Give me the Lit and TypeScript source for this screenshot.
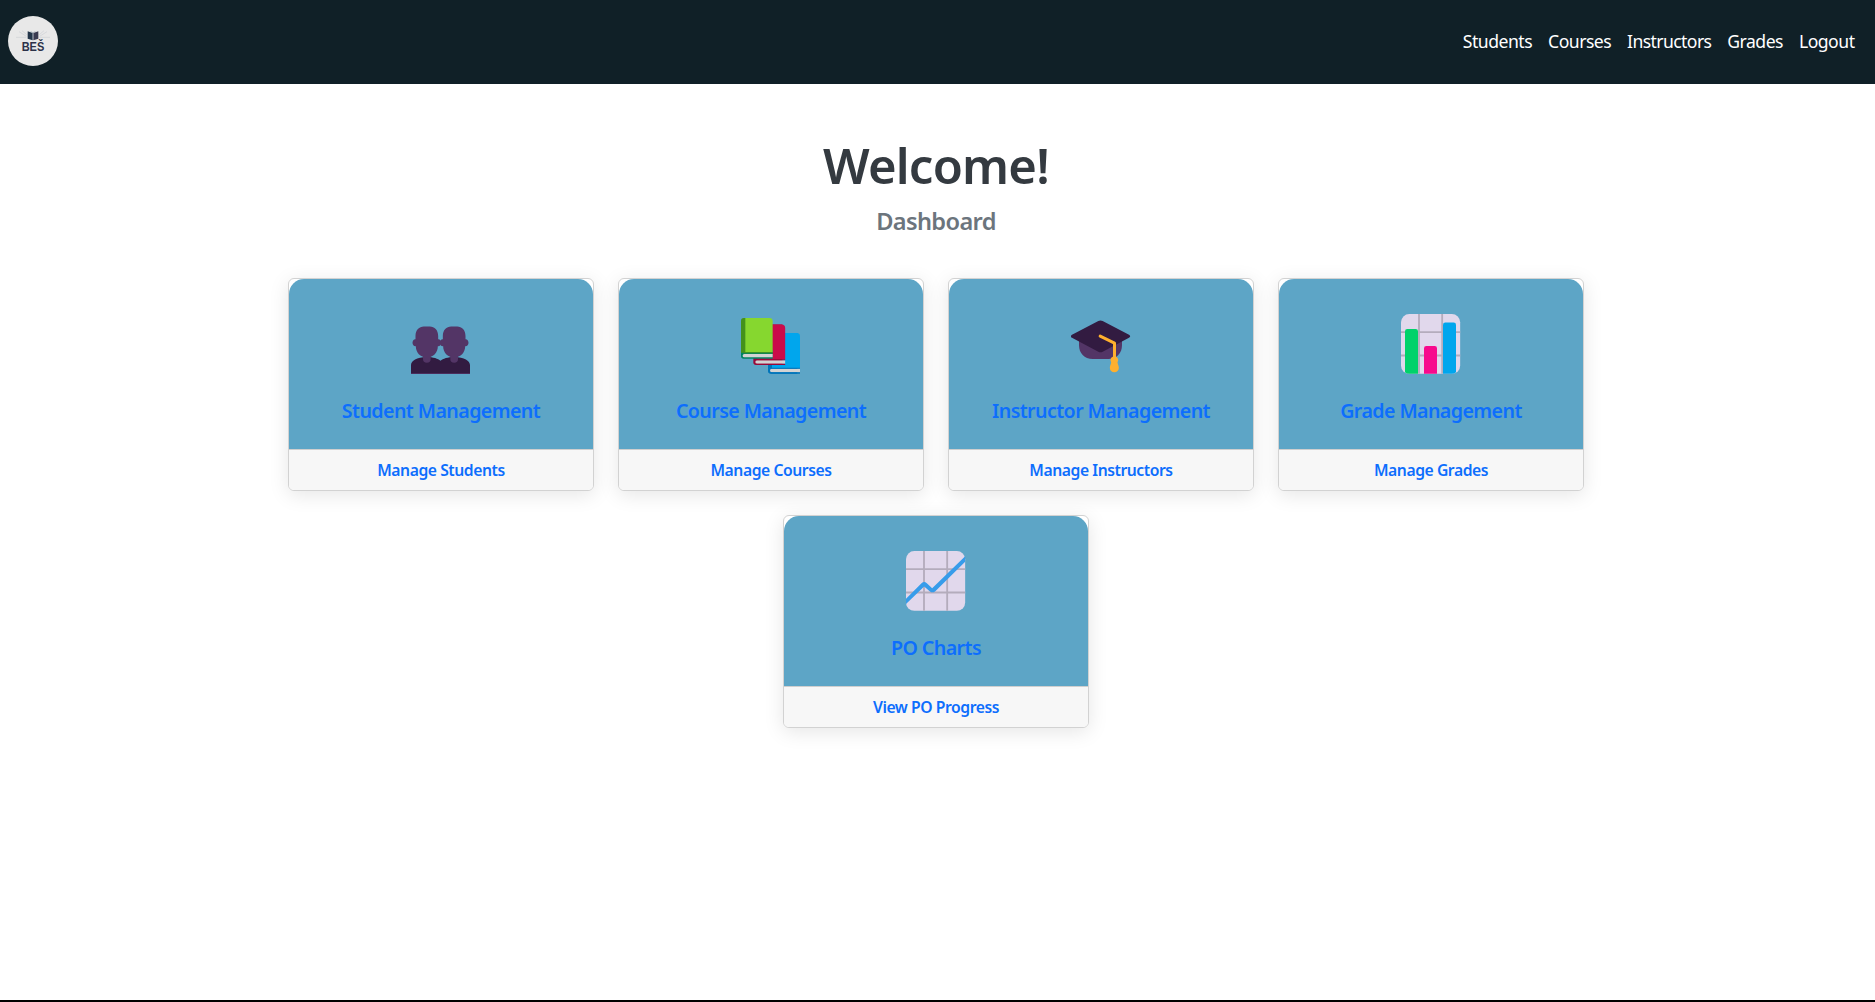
import { LitElement, html, css, svg } from "lit";
import { customElement } from "lit/decorators.js";

const people = html`<svg class="icon" viewBox="393 132 180 180">
  <path fill="#321b41" d="M393 312V285C393 273 410 262 440 261C460 261 474 266 481.500 272C489 266 503 261 523 261C553 262 570 273 570 285V312Z"/>
  <path fill="#533566" d="M393 309.500H570V312H393Z"/>
  <g fill="#533566">
    ${[440.5, 522.5].map(
      (x) => svg`<g transform="translate(${x} 0)">
        <path d="M-34 198C-34 180 -23 169.500 -9 169.500H9C23 169.500 34 180 34 198V207.500C39 207 43 212 43 218C43 224 39 229 33 228.500C33 247 20 262 0 262C-20 262 -33 247 -33 228.500C-39 229 -43 224 -43 218C-43 212 -39 207 -34 207.500Z"/>
        <path d="M-11.500 255H11.500V267A11.500 11.500 0 0 1 -11.500 267Z"/>
      </g>`
    )}
  </g>
</svg>`;

const books = html`<svg class="icon" viewBox="393 132 180 180">
  <path fill="#0074ba" d="M474 197Q474 189 482 189H562V311H482Q474 311 474 303Z"/>
  <path fill="#00a6ed" d="M486 189H560Q570 189 570 199V294H486Z"/>
  <path fill="#d3d3d3" d="M570 296.500H485Q480 296.500 480 301.500Q480 307 485 307H570Z"/>
  <path fill="#0074ba" d="M480 293.500H570V296.500H480ZM482 307H570V311H482Z"/>
  <path fill="#990838" d="M430 172Q430 163.500 438 163.500H517V285H438Q430 285 430 277Z"/>
  <path fill="#ca0b4a" d="M442 163.500H515Q525.500 163.500 525.500 174V268H442Z"/>
  <path fill="#d3d3d3" d="M525.500 271H441Q436 271 436 276Q436 281 441 281H525.500Z"/>
  <path fill="#990838" d="M436 267.500H525.500V271H436ZM438 281H525.500V285H438Z"/>
  <path fill="#008463" d="M393 240H488V266H401Q393 266 393 258Z"/>
  <path fill="#44911b" d="M393 152Q393 144 401 144H412V248H393Z"/>
  <path fill="#86d72f" d="M406 144H478Q488 144 488 154V247H406Z"/>
  <path fill="#44911b" d="M402 247H488V250H399Z"/>
  <path fill="#d3d3d3" d="M488 252H403Q398 252 398 257Q398 262 403 262H488Z"/>
</svg>`;

const cap = html`<svg class="icon" viewBox="393 132 180 180">
  <path fill="#533566" d="M417 205H546V225C546 250 530 267 505 267H458C433 267 417 250 417 225Z"/>
  <path fill="#321b41" d="M475 153Q481.500 149.500 488 153L567 194.500Q574 199 567 203.500L488 245Q481.500 248.500 475 245L396 203.500Q389 199 396 194.500Z"/>
  <path fill="none" stroke="#ffb02e" stroke-width="9" stroke-linecap="round" stroke-linejoin="round" d="M480.500 198.500L523.500 219.500V266"/>
  <path fill="#ffb02e" d="M523 259.500C530 259.500 534.500 264 534.500 270C534.500 273 533 275.500 532.500 277C533 283 536.500 287 536.500 293.500C536.500 302 530.500 307 523 307C515.500 307 509.500 302 509.500 293.500C509.500 287 513 283 513.500 277C512.500 275.500 511.500 273 511.500 270C511.500 264 516 259.500 523 259.500Z"/>
</svg>`;

const chartGrid = svg`
  <rect x="393" y="132" width="177.500" height="179.500" rx="25" fill="#e1d8ec"/>
  <path fill="none" stroke="#b4acbc" stroke-width="5.500" d="M447 132V311.500M516.500 132V311.500M393 186.500H570.500M393 256.500H570.500"/>`;

const bars = html`<svg class="icon" viewBox="393 132 180 180">
  ${chartGrid}
  <path fill="#00d26a" d="M405 184Q405 177 412 177H437Q444 177 444 184V311.500H418Q410 311.500 405 307Z"/>
  <path fill="#f70a8d" d="M462 235Q462 228 469 228H494Q501 228 501 235V311.500H462Z"/>
  <path fill="#00a6ed" d="M519 164.500Q519 157.500 526 157.500H551Q558 157.500 558 164.500V307Q553 311.500 545 311.500H519Z"/>
</svg>`;

const line = html`<svg class="icon" viewBox="393 132 180 180">
  ${chartGrid}
  <path fill="#379cea" d="M393 275L439.500 228.500Q447.500 221.500 455.500 228.500L471.500 243.500L570.500 148V164L481 252.500Q472.500 259.500 464 252.500L447.500 238.500L393 291Z"/>
</svg>`;

const cards = [
  { icon: people, title: "Student Management", link: "Manage Students" },
  { icon: books, title: "Course Management", link: "Manage Courses" },
  { icon: cap, title: "Instructor Management", link: "Manage Instructors" },
  { icon: bars, title: "Grade Management", link: "Manage Grades" },
  { icon: line, title: "PO Charts", link: "View PO Progress" },
];

@customElement("app-root")
export class AppRoot extends LitElement {
  static styles = css`
    :host {
      display: flex;
      flex-direction: column;
      box-sizing: border-box;
      height: 1002px;
      border-bottom: 2px solid #000;
      background: #fff;
      font-family: "Noto Sans", "Open Sans", sans-serif;
    }
    a { text-decoration: none; }
    .bar {
      display: flex;
      align-items: center;
      justify-content: space-between;
      box-sizing: border-box;
      height: 84px;
      padding: 0 20.5px 2px 8px;
      background: #102027;
    }
    .logo { display: block; width: 50px; height: 50px; }
    .nav { display: flex; gap: 15.9px; }
    .nav a { color: #fff; font-size: 17.6px; line-height: 27px; letter-spacing: -0.5px; }
    .nav a:nth-child(3) { letter-spacing: -0.6px; }
    .main { padding: 51px 3px 0 0; text-align: center; }
    h1 { margin: 0; font-size: 49px; line-height: 60px; font-weight: 570; color: #343a40; letter-spacing: -0.8px; }
    h2 { margin: 12px 0 0; font-size: 23.6px; line-height: 29px; font-weight: 570; color: #6c757d; letter-spacing: -0.65px; }
    .cards {
      display: flex;
      flex-wrap: wrap;
      justify-content: center;
      gap: 24px;
      width: 1320px;
      margin: 42px auto 0;
    }
    .card {
      display: flex;
      flex-direction: column;
      box-sizing: border-box;
      width: 306px;
      height: 213px;
      border: 1px solid #d2d2d2;
      border-radius: 6px;
      background: #fff;
      box-shadow: 0 4px 20px rgba(0, 0, 0, 0.1);
    }
    .top {
      display: flex;
      flex-direction: column;
      align-items: center;
      height: 170px;
      border-radius: 15px 15px 0 0;
      background: #5da5c6;
      color: #0d6efd;
    }
    .icon { display: block; width: 60px; height: 60px; margin-top: 35px; }
    .title { margin-top: 25px; font-size: 19.6px; line-height: 24px; font-weight: 570; letter-spacing: -0.57px; }
    .foot {
      flex: 1;
      border-top: 1px solid #cfcfcf;
      border-radius: 0 0 5px 5px;
      background: #f7f7f7;
      font-size: 15.7px;
      line-height: 40px;
      font-weight: 570;
      letter-spacing: -0.44px;
    }
    .foot a { color: #0d6efd; }
  `;

  render() {
    return html`
      <header class="bar">
        <svg class="logo" viewBox="24 48 150 150">
          <circle cx="99" cy="123" r="75" fill="#e8e8e8"/>
          <path fill="none" stroke="#d2d5d8" stroke-width="2.500" d="M48 112H79M119 112H150M57 95L79 109M141 95L119 109M66 92L80 104M132 92L118 104"/>
          <path fill="#24364a" d="M83 94L98 99V121L83 116Z"/>
          <path fill="#3a3a50" d="M115 94L100 99V121L115 116Z"/>
          <path fill="#8d9aa8" d="M88 92L98.300 98V119H99.700V98L110 92L99 97Z"/>
          <text x="65" y="153" font-family="Liberation Sans, sans-serif" font-weight="700" font-size="38" textLength="68" lengthAdjust="spacingAndGlyphs" fill="#2c3148">BEŠ</text>
        </svg>
        <nav class="nav">
          ${["Students", "Courses", "Instructors", "Grades", "Logout"].map((t) => html`<a href="#">${t}</a>`)}
        </nav>
      </header>
      <main class="main">
        <h1>Welcome!</h1>
        <h2>Dashboard</h2>
        <div class="cards">
          ${cards.map(
            (c) => html`<section class="card">
              <div class="top">${c.icon}<div class="title">${c.title}</div></div>
              <div class="foot"><a href="#">${c.link}</a></div>
            </section>`
          )}
        </div>
      </main>
    `;
  }
}
